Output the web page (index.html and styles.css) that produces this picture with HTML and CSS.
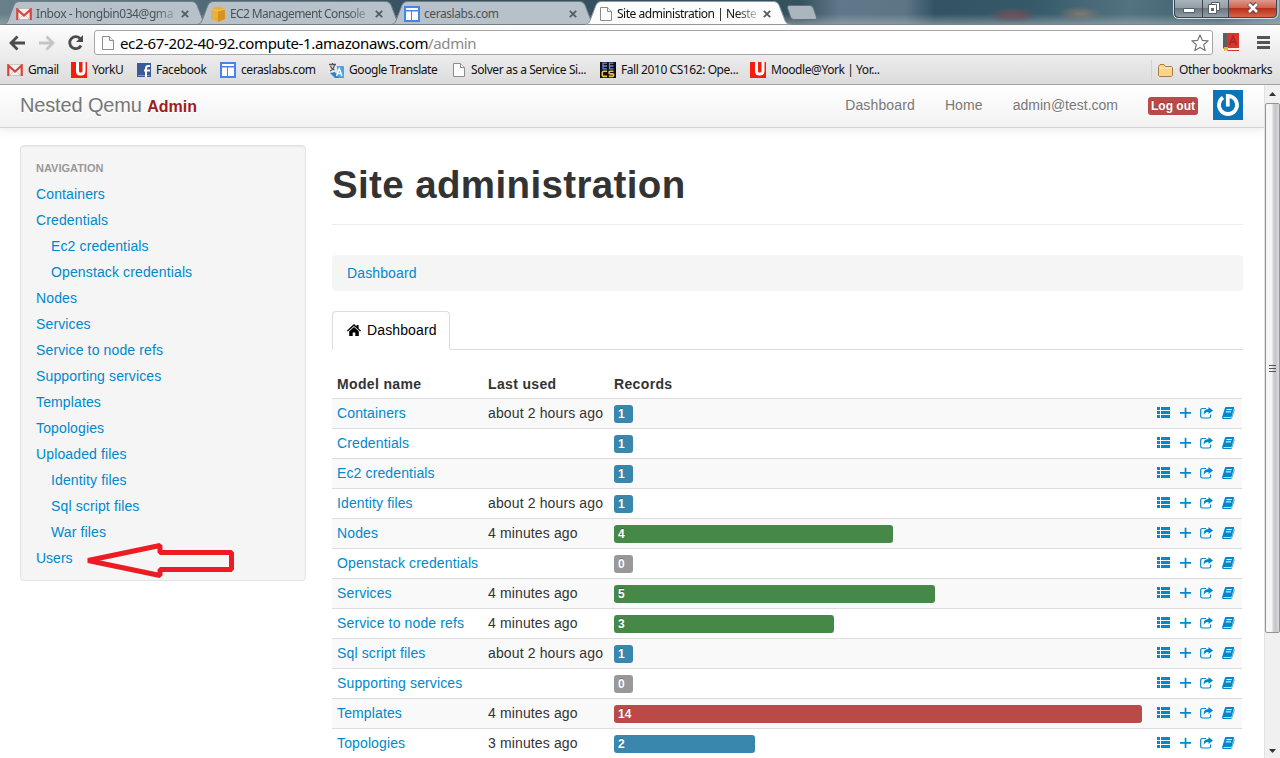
FILE: index.html
```
<!DOCTYPE html>
<html lang="en">
<head>
<meta charset="utf-8">
<title>Site administration | Nested Qemu Admin</title>
<link rel="stylesheet" href="styles.css">
</head>
<body>
<svg class="defs" width="0" height="0">
  <symbol id="tab" viewBox="0 0 208 25"><path d="M0 24.5C4 24 4.500 22 6 18L11 5Q12.500 1.500 16 1.500H189Q192.500 1.500 194 5L199 18C200.500 22 201 24 206 24.500Z"/></symbol>
  <symbol id="gmail" viewBox="0 0 16 12"><path fill="#f4f0ee" d="M1 1h14v10H1z"/><path fill="none" stroke="#bbb" stroke-width=".7" d="M3 11l4-4M13 11L9 7M1 .5h14M1 11.500h14"/><path fill="none" stroke="#d8433b" stroke-width="2.200" d="M1.300 12V1.500L8 7.500l6.700-6V12"/></symbol>
  <symbol id="york" viewBox="0 0 16 16"><path fill="#f51d0b" d="M0 0h16v16H0z"/><path fill="none" stroke="#fff" stroke-width="3" d="M6.500 0v9q0 3 2.500 3h1q3 0 3-3V0" /></symbol>
  <symbol id="grid" viewBox="0 0 16 16"><path fill="#4683ea" d="M0 0h16v16H0z"/><path fill="#fff" d="M2 2h12v2H2zM2 5.500h5V14H2zM8 5.500h6V14H8z"/></symbol>
  <symbol id="page" viewBox="0 0 12 14"><path fill="#fcfcfc" stroke="#8c8c8c" d="M.5.5h7l4 4v9H.5z"/><path fill="#eee" stroke="#8c8c8c" d="M7.500.500v4h4"/></symbol>
  <symbol id="x" viewBox="0 0 8 8"><path stroke="#555b60" stroke-width="1.800" d="M.8.8l6.400 6.400M7.200.8L.8 7.200"/></symbol>
  <symbol id="list" viewBox="0 0 14 12"><path d="M0 0h3v3H0zM4 0h9v3H4zM0 4h3v3H0zM4 4h9v3H4zM0 8h3v3H0zM4 8h9v3H4z"/></symbol>
  <symbol id="plus" viewBox="0 0 12 12"><path d="M4.700 .8h1.700v4.300H11v1.700H6.400v4.300H4.700V6.800H0V5.100h4.700z"/></symbol>
  <symbol id="share" viewBox="0 0 14 12"><path fill="none" stroke="#08c" stroke-width="1.200" d="M6 1.500H2.500Q.7 1.500.7 3.300v5.900Q.7 11 2.500 11h6.300q1.800 0 1.800-1.800V7.500"/><path d="M8.500 0L13 3.600 8.500 7V5Q5 4.800 3.800 8 3 2.200 8.500 2.100z"/></symbol>
  <symbol id="book" viewBox="0 0 13 12"><path d="M4 0h7.500q.8.200.5 1L9.700 9.500q-.3.800-1 .8H2q-1 0-.6.700H9.500L12.300 2q.5.800.2 1.600L10 11q-.3 1-1.300 1H1.300Q-.3 11.600.2 9.800L2.900 1Q3.200 0 4 0z"/><path stroke="#fff" d="M4.500 2.600h5.300M3.800 4.900h5.300"/></symbol>
  <symbol id="acts" viewBox="0 0 80 12"><use href="#list" x="0" width="14" height="12"/><use href="#plus" x="23" width="12" height="12"/><use href="#share" x="43" width="14" height="12"/><use href="#book" x="65" width="13" height="12"/></symbol>
</svg>

<header class="browser">
  <div class="titlebar">
    <div class="tabs">
      <div class="tab"><svg class="shape"><use href="#tab"/></svg><svg class="fav mail"><use href="#gmail"/></svg><span class="t fade">Inbox - hongbin034@gma</span><svg class="close"><use href="#x"/></svg></div>
      <div class="tab"><svg class="shape"><use href="#tab"/></svg><svg class="fav" viewBox="0 0 16 16"><path fill="#e9b03c" d="M1 3l7-3 7 3v10l-7 3-7-3z"/><path fill="#d7931d" d="M8 5l7-2v10l-7 3z"/><path stroke="#f0c364" d="M1 3l7 2 7-2" fill="none"/></svg><span class="t fade ec2">EC2 Management Console</span><svg class="close"><use href="#x"/></svg></div>
      <div class="tab"><svg class="shape"><use href="#tab"/></svg><svg class="fav"><use href="#grid"/></svg><span class="t">ceraslabs.com</span><svg class="close"><use href="#x"/></svg></div>
      <div class="tab active"><svg class="shape"><use href="#tab"/></svg><svg class="fav doc"><use href="#page"/></svg><span class="t fade">Site administration | Neste</span><svg class="close"><use href="#x"/></svg></div>
      <svg class="newtab" viewBox="0 0 32 16"><path fill="#aab5be" stroke="#626f78" d="M3.500.5H24q2.500 0 3.500 3l3 8.500q1 2.500-1.500 2.500H7.500q-2 0-3-2.500L1.500 3Q1 .5 3.500.500z"/></svg>
    </div>
    <svg class="winbtns" viewBox="0 0 106 19">
      <defs><linearGradient id="wg" x2="0" y2="1"><stop offset="0" stop-color="#a9b4bc"/><stop offset=".45" stop-color="#919ca4"/><stop offset=".5" stop-color="#6c777f"/><stop offset="1" stop-color="#929fa8"/></linearGradient><linearGradient id="wr" x2="0" y2="1"><stop offset="0" stop-color="#dd9a8d"/><stop offset=".45" stop-color="#cd6450"/><stop offset=".5" stop-color="#b9301c"/><stop offset="1" stop-color="#d7654a"/></linearGradient></defs>
      <path fill="url(#wg)" d="M2 0h56v17H6q-4 0-4-4z"/><path fill="url(#wr)" d="M56 0h47v13q0 4-4 4H56z"/>
      <path fill="none" stroke="#d7dfe4" d="M.5 0v13q0 5.500 5.500 5.500h93.500q5.500 0 5.500-5.500V0"/><path fill="none" stroke="#3d474d" d="M1.500 0v13q0 4.500 4.500 4.500h93q4.500 0 4.500-4.500V0M29.500 0v17M55.500 0v17"/>
      <path fill="#fff" stroke="#555f67" d="M10.500 8.500h11v4h-11z"/><path fill="#fff" stroke="#555f67" d="M38.500 2.500h8v8h-8z"/><path fill="#fff" stroke="#555f67" d="M35.500 4.500h8v9h-8z"/><path fill="#667" d="M38 8h3v3h-3z"/>
      <path stroke="#5e4646" stroke-width="4.500" d="M76 3.500l8 9M84 3.500l-8 9"/><path stroke="#fff" stroke-width="2.600" d="M76 4l8 8M84 4l-8 8"/>
    </svg>
  </div>
  <div class="toolbar">
    <svg class="nav" viewBox="0 0 94 28">
      <g fill="none" stroke-width="2.800"><path stroke="#4c4c4c" d="M25 13H12M17.500 6.500L11 13l6.500 6.500"/><path stroke="#c4c4c4" d="M39 13h13M46.500 6.500L53 13l-6.500 6.500"/><path stroke="#4c4c4c" d="M80 8.500A6 6 0 1 0 81 15.500"/></g><path fill="#4c4c4c" d="M83 5v7h-7z"/>
    </svg>
    <div class="omni"><svg class="doc"><use href="#page"/></svg><span class="url">ec2-67-202-40-92.compute-1.amazonaws.com<i>/admin</i></span>
      <svg class="star" viewBox="0 0 18 18"><path fill="#fff" stroke="#777" stroke-width="1.200" stroke-linejoin="round" d="M9 1l2.300 5.300 5.900.5-4.500 3.800 1.400 5.900L9 13.400l-5.100 3.100 1.400-5.900L.8 6.800l5.900-.5z"/></svg></div>
    <svg class="ext" viewBox="0 0 16 18"><path fill="#d9372d" d="M4 0h12v15H4z"/><path fill="#5b5f62" d="M0 0h4v15l-2 2-2-2z"/><path fill="#eee" d="M4 15h12v2H4z"/><path stroke="#d9372d" d="M4 17.500h12"/><path stroke="#a92b24" stroke-width="1.800" fill="none" d="M6.500 12l3.500-9 3.500 9M8 9h4"/><path fill="#f3b51b" d="M1 14h4v4l-2-1-2 1z"/></svg>
    <svg class="menu" viewBox="0 0 13 14"><path fill="#555" d="M0 0h13v3H0zM0 5h13v3H0zM0 10h13v3H0z"/></svg>
  </div>
  <div class="bookmarks">
    <a class="b1"><svg class="fav mail"><use href="#gmail"/></svg><span>Gmail</span></a>
    <a class="b2"><svg class="fav"><use href="#york"/></svg><span>YorkU</span></a>
    <a class="b3"><svg class="fb" viewBox="0 0 14 14"><path fill="#3d5998" d="M0 0h14v14H0z"/><path fill="#8497c0" d="M1 12h12v1H1z"/><path fill="none" stroke="#fff" stroke-width="2" d="M9 14V5.500Q9 3 11 3h2M7 7.500h6"/></svg><span>Facebook</span></a>
    <a class="b4"><svg class="fav"><use href="#grid"/></svg><span>ceraslabs.com</span></a>
    <a class="b5"><svg class="fav" viewBox="0 0 16 16"><path fill="#4ba3e4" d="M6 4h9q1 0 1 1v11H8z"/><path fill="#e8e8e8" d="M0 0h8l2 11H0z"/><path fill="none" stroke="#555" stroke-width="1.300" d="M1 2.500h7M4.500 1v2M2 9q4-2 4.500-6M2.500 4q1 3 4 4"/><path fill="#3280c8" d="M2 11l5-1 4 6H7z"/><path fill="none" stroke="#fff" stroke-width="1.400" d="M8.500 14L11.300 6.500 14 14M9.500 11.500h4"/></svg><span>Google Translate</span></a>
    <a class="b6"><svg class="doc"><use href="#page"/></svg><span>Solver as a Service Si...</span></a>
    <a class="b7"><svg class="fav" viewBox="0 0 16 16"><path fill="#101010" d="M0 0h16v16H0z"/><path fill="none" stroke="#6488e8" stroke-width="1.300" d="M7 1.200H3v5.600h4M3 4h4M13.500 1.200H9.500v5.600h4M9.500 4h4"/><path fill="none" stroke="#efc52f" stroke-width="1.600" d="M7 9.300H3.500q-1.200 0-1.200 1.200v2.700q0 1.200 1.200 1.200H7M13.500 9.300H10q-1 0-1 1.300t1 1.300h2.500q1.200 0 1.200 1.200t-1.200 1.300H8.800"/></svg><span>Fall 2010 CS162: Ope...</span></a>
    <a class="b8"><svg class="fav"><use href="#york"/></svg><span>Moodle@York | Yor...</span></a>
    <a class="b9"><svg class="folder" viewBox="0 0 15 13"><path fill="#fbd489" stroke="#a97b42" d="M.5 11.500V2.500L2 .5h4L7.500 2.500h6l1 1v8l-1 1h-12z"/><path stroke="#fff0c8" d="M1.500 4h12"/></svg><span>Other bookmarks</span></a>
  </div>
</header>

<div class="viewport">
<div class="page">
  <nav class="navbar">
    <div class="brand">Nested Qemu <b>Admin</b></div>
    <div class="links"><a class="l1">Dashboard</a><a class="l2">Home</a><a class="l3">admin@test.com</a><span class="logout">Log out</span>
      <svg class="avatar" viewBox="0 0 30 30"><path fill="#0b73b8" d="M0 0h30v30H0z"/><path fill="none" stroke="#fff" stroke-width="3.800" d="M10 7.500A9 9 0 1 0 20 7.500Q18 6 14.800 6v10.500"/></svg></div>
  </nav>
  <div class="columns">
    <aside class="well">
      <h6>Navigation</h6>
      <a>Containers</a><a>Credentials</a><a class="sub">Ec2 credentials</a><a class="sub">Openstack credentials</a><a>Nodes</a><a>Services</a><a>Service to node refs</a><a>Supporting services</a><a>Templates</a><a>Topologies</a><a>Uploaded files</a><a class="sub">Identity files</a><a class="sub">Sql script files</a><a class="sub">War files</a><a class="users">Users</a>
      <svg class="arrow" viewBox="0 0 150 36"><path fill="none" stroke="#ed1c24" stroke-width="5" d="M3 18.500L75 3.500V10.500H146.500V27.500H75V33.500Z" stroke-linejoin="bevel"/></svg>
    </aside>
    <main>
      <h1>Site administration</h1>
      <div class="crumb">Dashboard</div>
      <div class="pills"><div class="pill"><svg viewBox="0 0 14 12"><path d="M7 0l2.600 2.500V1h2v3.400L14 6.600l-.8.900L7 2 .8 7.500 0 6.600z"/><path d="M7 3l4.800 4.300V12H8.300V8.500H5.700V12H2.200V7.300z"/></svg>Dashboard</div></div>
      <div class="table">
        <div class="row head"><b>Model name</b><b>Last used</b><b>Records</b></div>
        <div class="row odd"><a>Containers</a><span>about 2 hours ago</span><div><p class="bar info" style="width:19px">1</p></div><svg><use href="#acts"/></svg></div>
        <div class="row"><a>Credentials</a><span></span><div><p class="bar info" style="width:19px">1</p></div><svg><use href="#acts"/></svg></div>
        <div class="row odd"><a>Ec2 credentials</a><span></span><div><p class="bar info" style="width:19px">1</p></div><svg><use href="#acts"/></svg></div>
        <div class="row"><a>Identity files</a><span>about 2 hours ago</span><div><p class="bar info" style="width:19px">1</p></div><svg><use href="#acts"/></svg></div>
        <div class="row odd"><a>Nodes</a><span>4 minutes ago</span><div><p class="bar ok" style="width:279px">4</p></div><svg><use href="#acts"/></svg></div>
        <div class="row"><a>Openstack credentials</a><span></span><div><p class="bar none" style="width:19px">0</p></div><svg><use href="#acts"/></svg></div>
        <div class="row odd"><a>Services</a><span>4 minutes ago</span><div><p class="bar ok" style="width:321px">5</p></div><svg><use href="#acts"/></svg></div>
        <div class="row"><a>Service to node refs</a><span>4 minutes ago</span><div><p class="bar ok" style="width:220px">3</p></div><svg><use href="#acts"/></svg></div>
        <div class="row odd"><a>Sql script files</a><span>about 2 hours ago</span><div><p class="bar info" style="width:19px">1</p></div><svg><use href="#acts"/></svg></div>
        <div class="row"><a>Supporting services</a><span></span><div><p class="bar none" style="width:19px">0</p></div><svg><use href="#acts"/></svg></div>
        <div class="row odd"><a>Templates</a><span>4 minutes ago</span><div><p class="bar bad" style="width:528px">14</p></div><svg><use href="#acts"/></svg></div>
        <div class="row"><a>Topologies</a><span>3 minutes ago</span><div><p class="bar info" style="width:141px">2</p></div><svg><use href="#acts"/></svg></div>
      </div>
    </main>
  </div>
</div>
<div class="scroll">
  <svg class="up" viewBox="0 0 7 4"><path fill="#333" d="M3.500 0L7 4H0z"/></svg>
  <div class="thumb"><i></i><i></i><i></i></div>
  <svg class="down" viewBox="0 0 7 4"><path fill="#333" d="M0 0h7L3.500 4z"/></svg>
</div>
</div>
</body>
</html>
```
FILE: styles.css
```
* { box-sizing: border-box; }
body { margin: 0; width: 1280px; height: 758px; overflow: hidden; background: #fff; font: 14px/20px "Liberation Sans", Arial, sans-serif; letter-spacing: .13px; color: #333; }
.defs { display: block; position: absolute; }
svg { display: block; flex: none; }
h1, h6, p { margin: 0; }

.browser { height: 85px; font-family: "Noto Sans", "Open Sans", sans-serif; font-size: 12px; letter-spacing: -.43px; background: linear-gradient(#fdfdfd 25px, #dcdcdc 84px); border-bottom: 1px solid #a3a3a3; }
.titlebar { height: 25px; display: flex; justify-content: space-between; border-bottom: 1px solid #79838a;
  background: radial-gradient(ellipse 26px 8px at 1013px 15px, #754f57, transparent), radial-gradient(ellipse 22px 8px at 1080px 14px, #80796f, transparent), linear-gradient(transparent 14px, #a9b4ba88 24px), linear-gradient(90deg, #68808a 0, #466270 300px, #35505f 420px, #34515e 800px, #60798a 840px, #5c7685 905px, #335364 935px, #355969 1030px, #547380 1130px, #3c5f6d 1220px, #75929d); }
.tabs { display: flex; padding-left: 3px; height: 25px; }
.tab { position: relative; width: 194px; display: flex; align-items: center; padding: 2px 8px 0 13px; color: #4b5257; }
.tab .shape { position: absolute; left: 0; top: 0; width: 208px; height: 25px; fill: #b7c1c9; stroke: #727d85; }
.tab .fav, .tab .t, .tab .close { position: relative; }
.tab .close { width: 8px; height: 8px; margin-left: auto; }
.tab .t { margin-left: 4px; white-space: nowrap; }
.tab .ec2 { letter-spacing: -.6px; }
.fade { mask-image: linear-gradient(90deg, #000 118px, #0004 139px); }
.tab.active { color: #111; z-index: 1; }
.tab.active .shape { fill: #fcfcfc; stroke: #8d979d; }
.tab.active .fav { margin-left: 2px; }
.tab.active .t { margin-left: 5px; letter-spacing: -.47px; }
.fav { width: 16px; height: 16px; }
.fav.mail { height: 12px; }
.doc, .fav.doc { width: 12px; height: 14px; }
.newtab { width: 32px; height: 16px; margin: 5px 0 0 7px; }
.winbtns { width: 106px; height: 19px; margin-right: 1px; }

.toolbar { height: 33px; display: flex; align-items: flex-start; padding-top: 5px; }
.nav { width: 94px; height: 28px; }
.omni { width: 1119px; height: 25px; border: 1px solid #a6a6a6; border-radius: 3px; background: #fff; display: flex; align-items: center; padding: 0 3px 0 7px; }
.url { margin-left: 6px; font-size: 15px; letter-spacing: -.37px; color: #000; white-space: nowrap; }
.url i { font-style: normal; color: #8a8a8a; }
.star { width: 18px; height: 18px; margin-left: auto; }
.ext { width: 16px; height: 18px; margin: 3px 0 0 10px; }
.menu { width: 13px; height: 14px; margin: 6px 0 0 18px; }

.bookmarks { height: 24px; display: flex; align-items: center; padding-left: 7px; }
.bookmarks a { display: flex; align-items: center; gap: 5px; white-space: nowrap; flex: none; color: #111; }
.fb { width: 14px; height: 14px; }
.folder { width: 15px; height: 13px; }
.b1 { width: 64px; } .b2 { width: 66px; } .b3 { width: 83px; } .b4 { width: 108px; } .b5 { width: 125px; }
.b6 { width: 147px; } .b7 { width: 150px; }
.bookmarks .b6 { gap: 6px; }
.bookmarks .b9 { margin: 0 8px 0 auto; padding-left: 6px; border-left: 1px solid #cdd3d8; gap: 6px; }

.viewport { height: 673px; display: flex; }
.page { width: 1264px; overflow: hidden; }
.navbar { height: 43px; display: flex; justify-content: space-between; padding: 0 21px 0 20px; background: linear-gradient(#fff, #f2f2f2); border-bottom: 1px solid #d4d4d4; box-shadow: 0 1px 10px rgba(0,0,0,.1); color: #777; text-shadow: 0 1px 0 #fff; }
.brand { font-size: 20px; line-height: 40px; letter-spacing: -.15px; white-space: nowrap; }
.brand b { font-size: 16px; letter-spacing: 0; color: #9d2020; }
.links { display: flex; align-items: center; padding-bottom: 2px; }
.l1, .l2 { margin-right: 30px; }
.l3 { margin-right: 30px; letter-spacing: 0; }
.logout { width: 50px; height: 18px; border-radius: 3px; background: #b94a48; color: #fff; font: bold 12px/18px "Liberation Sans", Arial, sans-serif; letter-spacing: 0; text-align: center; text-shadow: 0 -1px 0 rgba(0,0,0,.25); margin: 2px 15px 0 0; white-space: nowrap; }
.avatar { width: 30px; height: 30px; }

.columns { display: flex; align-items: flex-start; padding: 17px 21px 0 20px; gap: 26px; }
.well { position: relative; width: 286px; height: 436px; padding: 9px 14px; background: #f5f5f5; border: 1px solid #e3e3e3; border-radius: 4px; box-shadow: inset 0 1px 1px rgba(0,0,0,.05); }
.well h6 { font-size: 11px; line-height: 20px; padding: 3px 1px; height: 26px; letter-spacing: 0; color: #999; text-transform: uppercase; }
.well a { display: block; height: 26px; line-height: 26px; padding-left: 1px; }
.well .sub { padding-left: 16px; }
.well .users { letter-spacing: 0; }
a, .crumb { color: #08c; }
.navbar a { color: #777; }
.arrow { position: absolute; left: 64px; top: 396px; width: 150px; height: 36px; }

main { width: 911px; }
h1 { height: 80px; border-bottom: 1px solid #eee; font-size: 38.500px; line-height: 40px; padding-top: 20px; margin-bottom: 30px; white-space: nowrap; letter-spacing: .37px; }
.crumb { height: 36px; padding: 8px 15px; background: #f5f5f5; border-radius: 4px; }
.pills { height: 39px; margin-top: 20px; border-bottom: 1px solid #ddd; }
.pill { width: 118px; height: 39px; border: 1px solid #ddd; border-bottom-color: #fff; border-radius: 4px 4px 0 0; background: #fff; color: #000; display: flex; align-items: center; padding: 0 0 2px 14px; }
.pill svg { width: 14px; height: 12px; margin-right: 6px; }
.table { margin-top: 19px; width: 910px; }
.row { display: grid; grid-template-columns: 151px 126px 543px 90px; height: 30px; border-top: 1px solid #ddd; line-height: 20px; padding-top: 4px; white-space: nowrap; }
.row > * { margin-left: 5px; }
.row.head { height: 29px; border-top-color: transparent; padding-top: 4px; letter-spacing: .35px; }
.odd { background: #f9f9f9; }
.row > svg { width: 80px; height: 12px; margin-top: 4px; fill: #08c; }
.bar { height: 18px; margin-top: 2px; border-radius: 3px; padding-left: 4px; color: #fff; font-size: 12px; line-height: 18px; font-weight: bold; text-shadow: 0 -1px 0 rgba(0,0,0,.25); }
.info { background: #3a87ad; } .ok { background: #468847; } .bad { background: #b94a48; } .none { background: #999; }

.scroll { width: 16px; display: flex; flex-direction: column; align-items: center; background: #f0f0f0; border-left: 1px solid #e2e2e2; }
.up { width: 7px; height: 4px; margin-top: 7px; }
.thumb { width: 15px; height: 530px; margin-top: 7px; border: 1px solid #949494; border-radius: 2px; background: linear-gradient(90deg, #f5f5f5 45%, #d2d3d6 55%, #c5c6ca 75%, #dedede); display: flex; flex-direction: column; align-items: center; justify-content: center; gap: 2px; }
.thumb i { width: 7px; height: 1px; background: #555; }
.down { width: 7px; height: 4px; margin: auto 0 5px; }
```
